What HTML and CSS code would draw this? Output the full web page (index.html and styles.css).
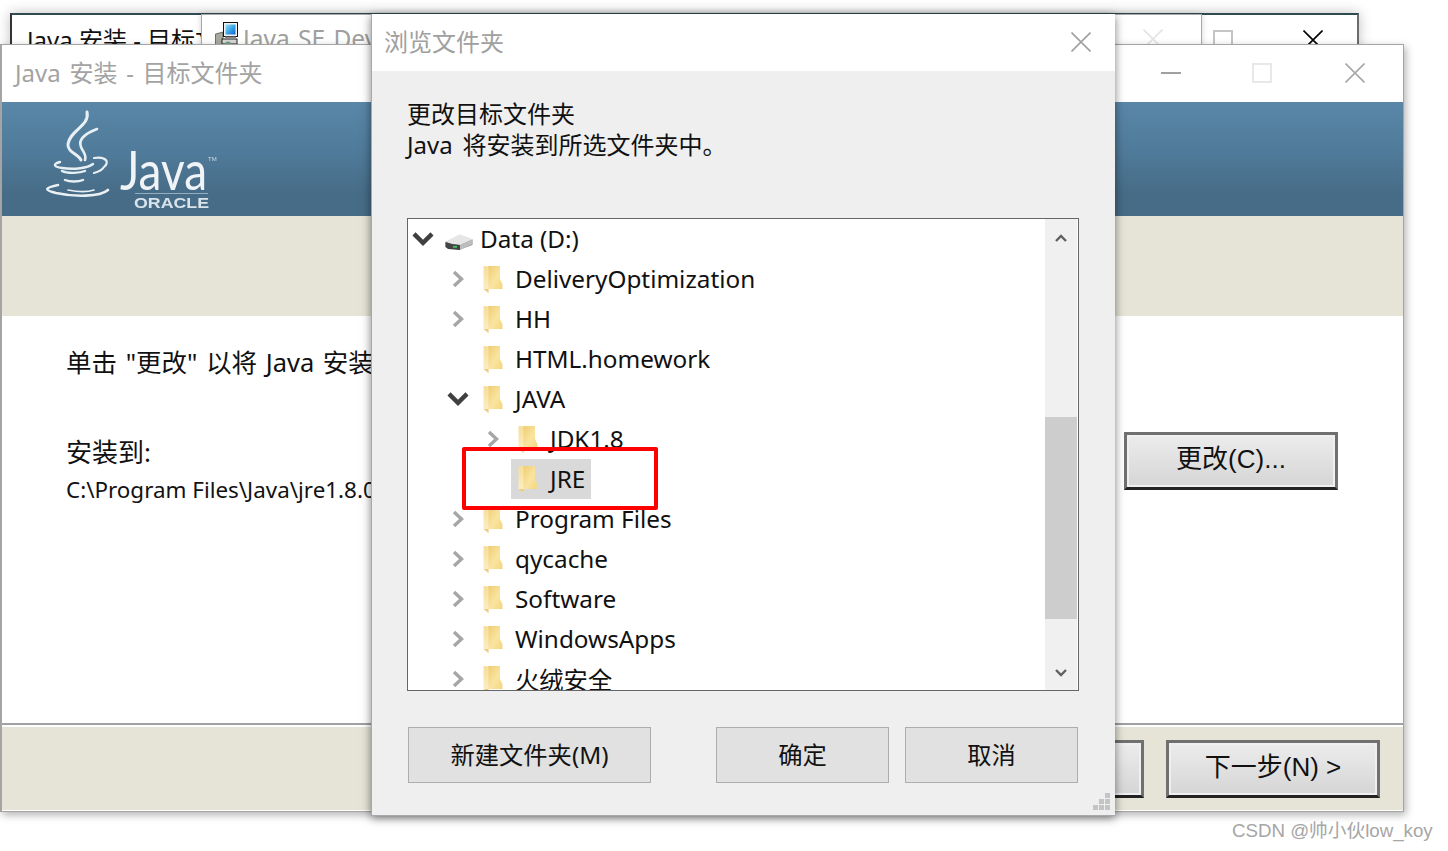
FILE: index.html
```html
<!DOCTYPE html>
<html lang="zh">
<head>
<meta charset="utf-8">
<title>Java 安装</title>
<link rel="stylesheet" href="styles.css">
</head>
<body>
<svg class="defs" width="0" height="0">
  <defs>
    <linearGradient id="fg" x1="0" y1="0" x2="1" y2="1">
      <stop offset="0" stop-color="#efcd72"/><stop offset=".55" stop-color="#f9e4a0"/><stop offset="1" stop-color="#f3d57f"/>
    </linearGradient>
    <linearGradient id="fs" x1="0" y1="0" x2="0" y2="1">
      <stop offset="0" stop-color="#f7dd98"/><stop offset="1" stop-color="#fdf0ca"/>
    </linearGradient>
    <linearGradient id="scr" x1="0" y1="0" x2="1" y2="1">
      <stop offset="0" stop-color="#9fe0f6"/><stop offset=".5" stop-color="#39a7e8"/><stop offset="1" stop-color="#1560c8"/>
    </linearGradient>
    <symbol id="folder" viewBox="0 0 20 27">
      <path d="M5 0 L17 0 L17 13 L19.500 18 L19.500 23 L5 23Z" fill="url(#fg)"/>
      <path d="M0.500 0 L5.500 0.500 L5.500 27 L0.500 23Z" fill="url(#fs)"/>
      <path d="M0.500 23 L5.500 27 L5.500 23" fill="#eccb80"/>
    </symbol>
    <symbol id="chev-r" viewBox="0 0 14 18"><path d="M3 2 L10.500 9 L3 16" fill="none" stroke="#a6a6a6" stroke-width="3.400"/></symbol>
    <symbol id="chev-d" viewBox="0 0 18 14"><path d="M2 3 L9 10 L16 3" fill="none" stroke="#404040" stroke-width="3.400"/></symbol>
    <symbol id="x" viewBox="0 0 20 20"><path d="M0.500 0.500 L19.500 19.500 M19.500 0.500 L0.500 19.500" fill="none" stroke="currentColor" stroke-width="1.600"/></symbol>
  </defs>
</svg>

<section class="win back-a">
  <div class="back-title">Java 安装 - 目标文件夹</div>
  <span class="back-square"></span>
  <svg class="back-x"><use href="#x"/></svg>
</section>

<section class="win back-b">
  <svg class="setup-icon" viewBox="0 0 24 26">
    <path d="M0.500 12 L8 10 L8 26 L0.500 26Z" fill="#a8a89c" stroke="#444" stroke-width=".7"/>
    <rect x="7" y="17" width="15" height="5" fill="#d8d8d8" stroke="#222"/>
    <rect x="8.500" y="0.500" width="14" height="14" fill="#f2f2f2" stroke="#111"/>
    <rect x="10.500" y="2.500" width="10" height="10" fill="url(#scr)"/>
    <path d="M10 14.500 H21 L21 17 H10Z" fill="#888"/>
    <circle cx="13" cy="23" r="3.500" fill="#6f9f82"/>
  </svg>
  <div class="back-b-title">Java SE Development Kit</div>
  <svg class="back-b-x"><use href="#x"/></svg>
</section>

<section class="win main">
  <header class="titlebar">
    <div class="main-title">Java 安装 - 目标文件夹</div>
    <div class="controls">
      <span class="ctl"><i class="min"></i></span>
      <span class="ctl"><i class="max"></i></span>
      <span class="ctl"><svg class="ctl-x"><use href="#x"/></svg></span>
    </div>
  </header>
  <div class="banner">
    <svg class="logo" viewBox="0 0 190 110" width="190" height="110">
      <g fill="none" stroke="#e9f0f4" stroke-linecap="round">
        <path d="M55 10 C58 24 38 28 36 42 C35 50 46 52 49 58" stroke-width="3"/>
        <path d="M65 27 C52 32 46 38 49 45 C51 50 55 53 53 58" stroke-width="2.600"/>
        <path d="M28 60 C20 62 22 65 30 66 C42 68 56 66 61 62" stroke-width="2.400"/>
        <path d="M62 56 C74 54 78 60 72 65 C70 68 66 70 62 71" stroke-width="2.200"/>
        <path d="M30 69 C36 72 48 71 53 69" stroke-width="2.400"/>
        <path d="M33 78 C38 80 46 80 51 78" stroke-width="2.400"/>
        <path d="M26 83 C12 86 12 88 24 91 C42 95 68 95 76 88" stroke-width="2.600"/>
        <path d="M36 88 C46 90 56 90 62 88" stroke-width="1.600"/>
      </g>
      <text class="logo-java" x="88" y="88" textLength="87" lengthAdjust="spacingAndGlyphs">Java</text>
      <text class="logo-tm" x="176" y="59">TM</text>
      <path d="M103 91.500 H176" stroke="#a9bfce" stroke-width=".8"/>
      <text class="logo-oracle" x="102" y="106" textLength="75" lengthAdjust="spacingAndGlyphs">ORACLE</text>
    </svg>
  </div>
  <div class="band"></div>
  <div class="content">
    <p class="lead">单击 "更改" 以将 Java 安装到其他文件夹。</p>
    <div class="install">
      <div class="install-text">
        <div class="install-label">安装到:</div>
        <div class="install-path">C:\Program Files\Java\jre1.8.0_301\</div>
      </div>
      <button class="btn-main change">更改(C)...</button>
    </div>
  </div>
  <footer class="footer">
    <button class="btn-main">&lt; 上一步(B)</button>
    <button class="btn-main">下一步(N) &gt;</button>
  </footer>
</section>

<section class="win dialog">
  <header class="dlg-titlebar">
    <div class="dlg-title">浏览文件夹</div>
    <svg class="dlg-x"><use href="#x"/></svg>
  </header>
  <div class="dlg-body">
    <div class="dlg-head">更改目标文件夹</div>
    <div class="dlg-head">Java 将安装到所选文件夹中。</div>
    <div class="tree">
      <ul class="rows">
        <li class="row"><svg class="exp-d"><use href="#chev-d"/></svg><span class="entry">
          <svg class="drive" viewBox="0 0 28 16">
            <path d="M0.500 8 L15 1 L27.500 5.500 L27.500 11 L14 16 L0.500 13Z" fill="#9a9a9a"/>
            <path d="M0.500 8 L14 0.500 Q16 0.500 27.500 5.500 L15 11 Q8 11 0.500 8Z" fill="#e6e6e6"/>
            <path d="M0.500 8 Q8 11 15 11 L15 16 L3 15 L0.500 13Z" fill="#444"/>
            <path d="M15 11 L27.500 5.500 L27.500 10 L15 16Z" fill="#bcbcbc"/>
            <rect x="8" y="12" width="4" height="1.800" fill="#3fbf5f"/>
          </svg><span class="name">Data (D:)</span></span></li>
        <li class="row lv1"><svg class="exp-r"><use href="#chev-r"/></svg><span class="entry"><svg class="fold"><use href="#folder"/></svg><span class="name">DeliveryOptimization</span></span></li>
        <li class="row lv1"><svg class="exp-r"><use href="#chev-r"/></svg><span class="entry"><svg class="fold"><use href="#folder"/></svg><span class="name">HH</span></span></li>
        <li class="row lv1"><span class="exp-none"></span><span class="entry"><svg class="fold"><use href="#folder"/></svg><span class="name">HTML.homework</span></span></li>
        <li class="row lv1"><svg class="exp-d"><use href="#chev-d"/></svg><span class="entry"><svg class="fold"><use href="#folder"/></svg><span class="name">JAVA</span></span></li>
        <li class="row lv2"><svg class="exp-r"><use href="#chev-r"/></svg><span class="entry"><svg class="fold"><use href="#folder"/></svg><span class="name">JDK1.8</span></span></li>
        <li class="row lv2"><span class="exp-none"></span><span class="entry selected"><svg class="fold"><use href="#folder"/></svg><span class="name">JRE</span></span></li>
        <li class="row lv1"><svg class="exp-r"><use href="#chev-r"/></svg><span class="entry"><svg class="fold"><use href="#folder"/></svg><span class="name">Program Files</span></span></li>
        <li class="row lv1"><svg class="exp-r"><use href="#chev-r"/></svg><span class="entry"><svg class="fold"><use href="#folder"/></svg><span class="name">qycache</span></span></li>
        <li class="row lv1"><svg class="exp-r"><use href="#chev-r"/></svg><span class="entry"><svg class="fold"><use href="#folder"/></svg><span class="name">Software</span></span></li>
        <li class="row lv1"><svg class="exp-r"><use href="#chev-r"/></svg><span class="entry"><svg class="fold"><use href="#folder"/></svg><span class="name">WindowsApps</span></span></li>
        <li class="row lv1"><svg class="exp-r"><use href="#chev-r"/></svg><span class="entry"><svg class="fold"><use href="#folder"/></svg><span class="name">火绒安全</span></span></li>
      </ul>
      <div class="scrollbar">
        <svg class="sb-arrow" viewBox="0 0 12 10"><path d="M1 8 L6 3 L11 8" fill="none" stroke="#606060" stroke-width="2.400"/></svg>
        <div class="sb-track"><div class="sb-thumb"></div></div>
        <svg class="sb-arrow sb-down" viewBox="0 0 12 10"><path d="M1 2 L6 7 L11 2" fill="none" stroke="#606060" stroke-width="2.400"/></svg>
      </div>
    </div>
    <div class="dlg-buttons">
      <button class="btn-dlg wide">新建文件夹(M)</button>
      <button class="btn-dlg">确定</button>
      <button class="btn-dlg">取消</button>
    </div>
  </div>
  <svg class="grip" viewBox="0 0 17 17"><g fill="#c4c4c4"><rect x="12" y="0" width="5" height="5"/><rect x="6" y="6" width="5" height="5"/><rect x="12" y="6" width="5" height="5"/><rect x="0" y="12" width="5" height="5"/><rect x="6" y="12" width="5" height="5"/><rect x="12" y="12" width="5" height="5"/></g></svg>
  <div class="redbox"></div>
</section>

<div class="watermark">CSDN @帅小伙low_koy</div>
</body>
</html>
```

FILE: styles.css
```css
* { box-sizing: border-box; }
html, body { margin: 0; height: 100%; }
body {
  position: relative;
  width: 1448px;
  height: 851px;
  overflow: hidden;
  background: #fff;
  font-family: "Noto Sans", "Noto Sans CJK SC", sans-serif;
  color: #111;
}
.defs { position: absolute; }
.win { position: absolute; }

/* back windows */
.back-a {
  left: 10px; top: 13px; width: 1349px; height: 200px;
  background: #fff;
  border-top: 2px solid #2f4b52;
  border-left: 2px solid #333;
  border-right: 2px solid #6d6d6d;
  box-shadow: 0 0 12px rgba(0,0,0,.25);
}
.back-title { position: absolute; left: 15px; top: 9px; font-size: 24px; line-height: 32px; color: #111; white-space: nowrap; }
.back-square { position: absolute; left: 1201px; top: 15px; width: 20px; height: 20px; border: 2px solid #c4c4c4; }
.back-x { position: absolute; left: 1291px; top: 15px; width: 20px; height: 20px; color: #000; }
.back-b {
  left: 201px; top: 14px; width: 1001px; height: 200px;
  background: #fff;
  border: 1px solid #a8a8a8;
  box-shadow: 0 0 6px rgba(0,0,0,.18);
}
.setup-icon { position: absolute; left: 13px; top: 7px; width: 24px; height: 26px; }
.back-b-title { position: absolute; left: 41px; top: 8px; font-size: 24.500px; line-height: 32px; word-spacing: 2px; color: #a0a0a0; white-space: nowrap; }
.back-b-x { position: absolute; left: 941px; top: 14px; width: 20px; height: 20px; color: #e4e4e4; }

/* main window */
.main {
  left: 0; top: 44px; width: 1404px; height: 768px;
  display: flex; flex-direction: column;
  background: #fff;
  border-top: 1px solid #a4a4a4;
  border-left: 2px solid #a4a4a4;
  border-right: 1px solid #a4a4a4;
  border-bottom: 1px solid #a4a4a4;
  box-shadow: 2px 3px 8px rgba(0,0,0,.3);
}
.titlebar { display: flex; justify-content: space-between; height: 57px; }
.main-title { padding: 11px 0 0 13px; font-size: 24px; line-height: 34px; word-spacing: 2.500px; color: #a3a3a3; }
.controls { display: flex; padding-right: 2px; }
.ctl { display: flex; align-items: center; justify-content: center; width: 92px; height: 57px; padding-bottom: 2px; }
.min { display: block; width: 20px; height: 2px; background: #a0a0a0; }
.max { display: block; width: 20px; height: 20px; margin-right: 2px; border: 2px solid #e8e8e8; }
.ctl-x { width: 20px; height: 20px; color: #a8a8a8; }
.banner { height: 114px; background: linear-gradient(#5a87a8 0%, #4f7a99 45%, #476c87 80%, #476c87 100%); padding-left: 30px; }
.logo { display: block; filter: blur(.6px); overflow: visible; }
.logo-java { font-family: "Lato", sans-serif; font-weight: 400; font-size: 54px; fill: #f0f4f7; }
.logo-tm { font-family: "Liberation Sans", sans-serif; font-size: 6px; fill: #cfdbe3; }
.logo-oracle { font-family: "Liberation Sans", sans-serif; font-weight: 700; font-size: 14px; fill: #d9e3ea; }
.band { height: 100px; background: #e6e4d6; }
.content { flex: 1; padding: 31px 65px 0 64px; overflow: hidden; }
.lead { margin: 0; font-size: 25.500px; line-height: 31px; word-spacing: 2px; white-space: nowrap; }
.install { display: flex; justify-content: space-between; margin-top: 59px; }
.install-label { font-size: 26px; line-height: 31px; }
.install-path { font-size: 22.400px; line-height: 43px; white-space: nowrap; }
.change { margin-top: -5px; }
.btn-main {
  width: 214px; height: 58px; padding: 0 0 10px;
  font-family: "Liberation Sans", "Noto Sans CJK SC", sans-serif;
  font-size: 26px; color: #111;
  background: linear-gradient(#ececec, #d5d5d5);
  border: 3px solid #707070;
  border-bottom-color: #222;
  box-shadow: inset 0 0 0 2px #efefef;
}
.footer {
  display: flex; justify-content: flex-end; gap: 22px;
  height: 88px; padding: 15px 23px 0 0;
  background: #e6e4d6;
  border-top: 2px solid #a0a0a0;
  box-shadow: inset 0 1px 0 #fff, inset 0 2px 0 #fff, inset 0 -1px 0 #fff;
}

/* dialog */
.dialog {
  left: 371px; top: 14px; width: 744px; height: 802px;
  display: flex; flex-direction: column;
  background: #efefef;
  border-left: 1px solid #a8a8a8;
  border-bottom: 1px solid #a8a8a8;
  box-shadow: 0 2px 9px rgba(0,0,0,.5);
}
.dlg-titlebar { display: flex; justify-content: space-between; align-items: center; height: 57px; padding: 0 24px 2px 12px; background: #fff; }
.dlg-title { padding-bottom: 2px; font-size: 24px; color: #a0a0a0; }
.dlg-x { width: 20px; height: 20px; color: #a0a0a0; }
.dlg-body { padding: 27px 36px 0 35px; }
.dlg-head { font-size: 24px; line-height: 31px; word-spacing: 3.500px; white-space: nowrap; }
.tree {
  display: flex;
  height: 473px; width: 672px; margin-top: 58px;
  background: #fff;
  border: 1px solid #666;
}
.rows { flex: 1; margin: 0; padding: 0; list-style: none; overflow: hidden; }
.row { display: flex; align-items: center; height: 40px; font-size: 24.300px; white-space: nowrap; }
.row.lv1 { padding-left: 35px; }
.row.lv2 { padding-left: 70px; }
.row.lv1 .entry, .row.lv2 .entry { margin-left: 3px; }
.exp-r, .exp-d, .exp-none { flex: none; width: 30px; height: 18px; }
.entry { display: flex; align-items: center; height: 40px; padding: 0 3px 0 7px; }
.name { padding-bottom: 2px; }
.selected { padding-right: 6px; background: #d9d9d9; }
.drive { flex: none; width: 28px; height: 16px; margin: 6px 7px 0 0; }
.fold { flex: none; width: 20px; height: 27px; margin: 1px 12px 0 0; }
.scrollbar { flex: none; display: flex; flex-direction: column; align-items: center; width: 32px; margin-right: 1px; background: #f0f0f0; }
.sb-arrow { flex: none; width: 12px; height: 10px; margin: 14px 0; }
.sb-down { margin: 0 0 12px; }
.sb-track { flex: 1; width: 100%; }
.sb-thumb { width: 100%; height: 202px; margin-top: 160px; background: #cdcdcd; }
.dlg-buttons { display: flex; margin-top: 36px; padding-left: 1px; gap: 16px; }
.btn-dlg {
  width: 173px; height: 56px; padding: 0 0 3px;
  font: inherit; font-size: 24.300px; color: #111;
  background: #e1e1e1; border: 1px solid #adadad;
}
.btn-dlg.wide { width: 243px; margin-right: 49px; }
.grip { position: absolute; right: 5px; bottom: 5px; width: 17px; height: 17px; }
.redbox {
  position: absolute; left: 90px; top: 433px; width: 196px; height: 63px;
  border: 4px solid #f00; border-radius: 2px;
}
.watermark {
  position: absolute; left: 1232px; top: 819px;
  font-family: "Liberation Sans", "Noto Sans CJK SC", sans-serif;
  font-size: 18.700px; line-height: 24px; color: #a6a6a6; white-space: nowrap;
}
```
